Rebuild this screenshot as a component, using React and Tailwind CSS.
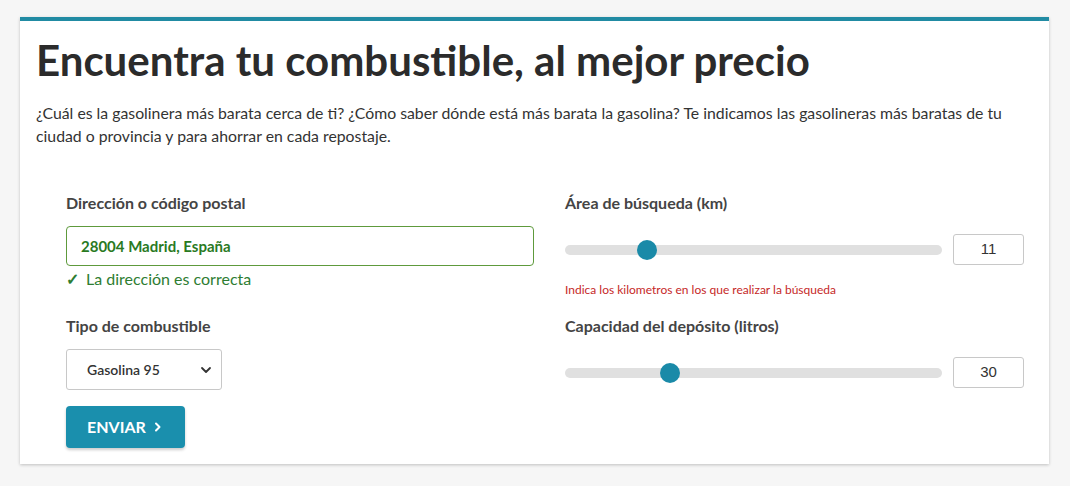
import React from "react";

function Slider({ pct }) {
  return (
    <div className="relative h-[10px] w-[377px] rounded-full bg-[#e0e0e0]">
      <div
        className="absolute top-1/2 h-[20px] w-[20px] -translate-x-1/2 -translate-y-1/2 rounded-full bg-[#1a8aa8]"
        style={{ left: `${pct}%` }}
      />
    </div>
  );
}

function NumBox({ value }) {
  return (
    <div className="flex h-[31px] w-[71px] items-center justify-center rounded-[3px] border border-[#c8c8c8] bg-white text-[15px] text-[#333] [font-family:'Liberation_Sans',Arial,sans-serif]">
      {value}
    </div>
  );
}

export default function App() {
  return (
    <div className="min-h-[486px] bg-[#f6f6f6] pt-[17px] pl-[20px] [font-family:Lato,'Noto_Sans',sans-serif]">
      <div className="w-[1029px] border-t-4 border-[#218ba3] bg-white pb-[16px] shadow-[0_1px_3px_rgba(0,0,0,0.22)]">
        <div className="px-[16px] pt-[13px]">
          <h1 className="text-[42px] font-bold leading-[52px] text-[#2b2b2b]">
            Encuentra tu combustible, al mejor precio
          </h1>
          <p className="mt-[15px] text-[15.8px] leading-[23px] text-[#333]">
            ¿Cuál es la gasolinera más barata cerca de ti? ¿Cómo saber dónde está más barata la gasolina? Te indicamos las gasolineras más baratas de tu ciudad o provincia y para ahorrar en cada repostaje.
          </p>
        </div>

        <div className="mt-[46px] pl-[46px]">
          <div className="flex">
            <div className="w-[468px]">
              <label className="block text-[16px] font-bold leading-[20px] text-[#444]">
                Dirección o código postal
              </label>
              <div className="mt-[13px] flex h-[40px] items-center rounded-[4px] border border-[#5e9a3c] px-[14px] text-[15px] font-bold text-[#2a7a1f]">
                28004 Madrid, España
              </div>
              <div className="mt-[3px] flex items-center gap-[7px] text-[16px] leading-[20px] text-[#2e7d32]">
                <span className="font-bold">✓</span>
                <span>La dirección es correcta</span>
              </div>
            </div>
            <div className="ml-[31px] w-[459px]">
              <label className="block text-[16px] font-bold leading-[20px] text-[#444]">
                Área de búsqueda (km)
              </label>
              <div className="mt-[21px] flex items-center gap-[11px]">
                <Slider pct={21.8} />
                <NumBox value="11" />
              </div>
              <p className="mt-[18px] text-[12px] leading-[14px] text-[#c62828]">
                Indica los kilometros en los que realizar la búsqueda
              </p>
            </div>
          </div>

          <div className="mt-[19px] flex">
            <div className="w-[468px]">
              <label className="block text-[16px] font-bold leading-[20px] text-[#444]">
                Tipo de combustible
              </label>
              <div className="mt-[13px] flex h-[41px] w-[156px] items-center justify-between rounded-[3px] border border-[#c8c8c8] pl-[20px] pr-[9px] text-[14px] font-semibold text-[#333]">
                <span>Gasolina 95</span>
                <svg width="12" height="8" viewBox="0 0 12 8" fill="none">
                  <path d="M2 2l4 4 4-4" stroke="#333" strokeWidth="1.8" strokeLinecap="round" strokeLinejoin="round" />
                </svg>
              </div>
              <button className="mt-[16px] flex h-[42px] w-[119px] items-center gap-[8px] rounded-[4px] bg-[#1a8fad] pl-[21px] text-[16px] font-bold text-white shadow-[0_2px_3px_rgba(0,0,0,0.2)]">
                <span>ENVIAR</span>
                <svg width="8" height="10" viewBox="0 0 8 10" fill="none">
                  <path d="M2 1.5l3.5 3.5L2 8.5" stroke="white" strokeWidth="2" strokeLinecap="round" strokeLinejoin="round" />
                </svg>
              </button>
            </div>
            <div className="ml-[31px] w-[459px]">
              <label className="block text-[16px] font-bold leading-[20px] text-[#444]">
                Capacidad del depósito (litros)
              </label>
              <div className="mt-[21px] flex items-center gap-[11px]">
                <Slider pct={27.9} />
                <NumBox value="30" />
              </div>
            </div>
          </div>
        </div>
      </div>
    </div>
  );
}
